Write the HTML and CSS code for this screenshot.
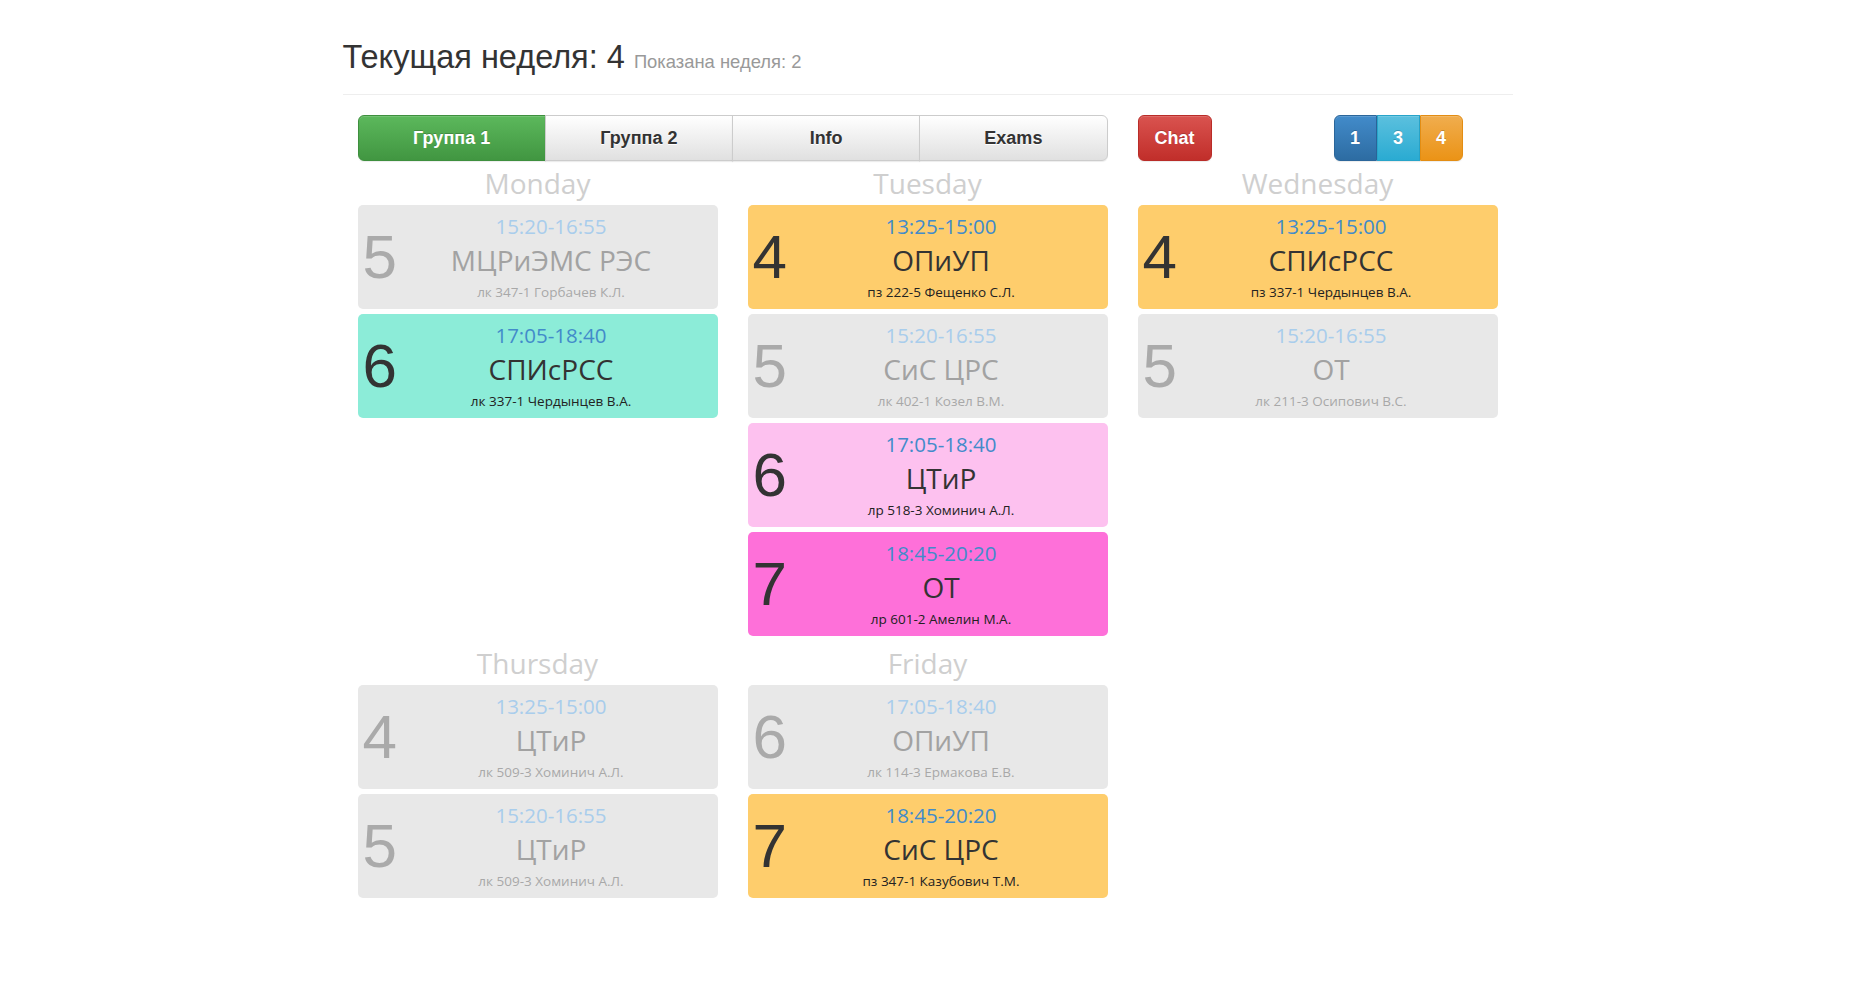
FILE: index.html
```html
<!DOCTYPE html>
<html lang="ru">
<head>
<meta charset="utf-8">
<title>Расписание</title>
<link rel="stylesheet" href="styles.css">
</head>
<body>
<div class="container">
  <div class="page-header">
    <h2>Текущая неделя: 4 <small>Показана неделя: 2</small></h2>
  </div>

  <div class="toolbar">
    <div class="toolbar-left">
      <div class="btn-group-justified">
        <a class="btn btn-success">Группа 1</a>
        <a class="btn btn-default">Группа 2</a>
        <a class="btn btn-default">Info</a>
        <a class="btn btn-default">Exams</a>
      </div>
    </div>
    <div class="toolbar-right">
      <a class="btn btn-danger btn-single">Chat</a>
      <div class="btn-group weeks">
        <a class="btn btn-primary">1</a>
        <a class="btn btn-info">3</a>
        <a class="btn btn-warning">4</a>
      </div>
    </div>
  </div>

  <div class="days">
    <div class="day">
      <div class="day-name">Monday</div>
      <div class="lesson past">
        <div class="num">5</div>
        <div class="body"><div class="time">15:20-16:55</div><div class="subj">МЦРиЭМС РЭС</div><div class="info">лк 347-1 Горбачев К.Л.</div></div>
      </div>
      <div class="lesson teal">
        <div class="num">6</div>
        <div class="body"><div class="time">17:05-18:40</div><div class="subj">СПИсРСС</div><div class="info">лк 337-1 Чердынцев В.А.</div></div>
      </div>
    </div>

    <div class="day">
      <div class="day-name">Tuesday</div>
      <div class="lesson orange">
        <div class="num">4</div>
        <div class="body"><div class="time">13:25-15:00</div><div class="subj">ОПиУП</div><div class="info">пз 222-5 Фещенко С.Л.</div></div>
      </div>
      <div class="lesson past">
        <div class="num">5</div>
        <div class="body"><div class="time">15:20-16:55</div><div class="subj">СиС ЦРС</div><div class="info">лк 402-1 Козел В.М.</div></div>
      </div>
      <div class="lesson lightpink">
        <div class="num">6</div>
        <div class="body"><div class="time">17:05-18:40</div><div class="subj">ЦТиР</div><div class="info">лр 518-3 Хоминич А.Л.</div></div>
      </div>
      <div class="lesson pink">
        <div class="num">7</div>
        <div class="body"><div class="time">18:45-20:20</div><div class="subj">ОТ</div><div class="info">лр 601-2 Амелин М.А.</div></div>
      </div>
    </div>

    <div class="day">
      <div class="day-name">Wednesday</div>
      <div class="lesson orange">
        <div class="num">4</div>
        <div class="body"><div class="time">13:25-15:00</div><div class="subj">СПИсРСС</div><div class="info">пз 337-1 Чердынцев В.А.</div></div>
      </div>
      <div class="lesson past">
        <div class="num">5</div>
        <div class="body"><div class="time">15:20-16:55</div><div class="subj">ОТ</div><div class="info">лк 211-3 Осипович В.С.</div></div>
      </div>
    </div>

    <div class="day">
      <div class="day-name">Thursday</div>
      <div class="lesson past">
        <div class="num">4</div>
        <div class="body"><div class="time">13:25-15:00</div><div class="subj">ЦТиР</div><div class="info">лк 509-3 Хоминич А.Л.</div></div>
      </div>
      <div class="lesson past">
        <div class="num">5</div>
        <div class="body"><div class="time">15:20-16:55</div><div class="subj">ЦТиР</div><div class="info">лк 509-3 Хоминич А.Л.</div></div>
      </div>
    </div>

    <div class="day">
      <div class="day-name">Friday</div>
      <div class="lesson past">
        <div class="num">6</div>
        <div class="body"><div class="time">17:05-18:40</div><div class="subj">ОПиУП</div><div class="info">лк 114-3 Ермакова Е.В.</div></div>
      </div>
      <div class="lesson orange">
        <div class="num">7</div>
        <div class="body"><div class="time">18:45-20:20</div><div class="subj">СиС ЦРС</div><div class="info">пз 347-1 Казубович Т.М.</div></div>
      </div>
    </div>
  </div>
</div>
</body>
</html>
```

FILE: styles.css
```css
* { box-sizing: border-box; }

body {
  margin: 0;
  background: #fff;
  color: #333;
  font-family: "Liberation Sans", Arial, sans-serif;
  font-size: 14px;
}

.container {
  width: 1170px;
  margin: 0 auto;
}

.page-header {
  margin: 40px 0 20px;
  padding-bottom: 9px;
  border-bottom: 1px solid #eee;
}

.page-header h2 {
  margin: 0 0 9px;
  font-size: 32.5px;
  font-weight: 500;
  line-height: 1.1;
  color: #333;
}

.page-header small {
  font-size: 18.4px;
  font-weight: 400;
  line-height: 1;
  color: #999;
}

.toolbar {
  display: grid;
  grid-template-columns: 780px 390px;
}

.toolbar-left,
.toolbar-right {
  padding: 0 15px;
}

.toolbar-right {
  display: flex;
  align-items: flex-start;
}

.btn {
  display: inline-block;
  padding: 10px 16px;
  font-size: 18px;
  line-height: 24px;
  font-weight: 700;
  text-align: center;
  border: 1px solid transparent;
  border-radius: 6px;
  cursor: pointer;
  white-space: nowrap;
  box-shadow: inset 0 1px 0 rgba(255,255,255,.15), 0 1px 1px rgba(0,0,0,.075);
}

.btn-group-justified {
  display: flex;
  width: 100%;
}

.btn-group-justified .btn {
  flex: 1 1 0;
  border-radius: 0;
}

.btn-group-justified .btn + .btn { margin-left: -1px; }

.btn-group-justified .btn:first-child { border-radius: 6px 0 0 6px; }
.btn-group-justified .btn:last-child { border-radius: 0 6px 6px 0; }

.btn-default {
  color: #333;
  text-shadow: 0 1px 0 #fff;
  background-image: linear-gradient(to bottom, #fff 0, #e0e0e0 100%);
  border-color: #ccc;
}

.btn-success {
  color: #fff;
  text-shadow: 0 -1px 0 rgba(0,0,0,.2);
  background-image: linear-gradient(to bottom, #5cb85c 0, #419641 100%);
  border-color: #3e8f3e;
}

.btn-danger {
  color: #fff;
  text-shadow: 0 -1px 0 rgba(0,0,0,.2);
  background-image: linear-gradient(to bottom, #d9534f 0, #c12e2a 100%);
  border-color: #b92c28;
}

.btn-primary {
  color: #fff;
  text-shadow: 0 -1px 0 rgba(0,0,0,.2);
  background-image: linear-gradient(to bottom, #428bca 0, #2d6ca2 100%);
  border-color: #2b669a;
}

.btn-info {
  color: #fff;
  text-shadow: 0 -1px 0 rgba(0,0,0,.2);
  background-image: linear-gradient(to bottom, #5bc0de 0, #2aabd2 100%);
  border-color: #28a4c9;
}

.btn-warning {
  color: #fff;
  text-shadow: 0 -1px 0 rgba(0,0,0,.2);
  background-image: linear-gradient(to bottom, #f0ad4e 0, #eb9316 100%);
  border-color: #e38d13;
}

.btn-group {
  display: flex;
}

.weeks {
  margin-left: 122px;
}

.weeks .btn {
  border-radius: 0;
  width: 43px;
  padding-left: 0;
  padding-right: 0;
}

.weeks .btn:first-child { border-radius: 6px 0 0 6px; }
.weeks .btn:last-child { border-radius: 0 6px 6px 0; }

.days {
  display: grid;
  grid-template-columns: repeat(3, 390px);
  align-items: start;
}

.day {
  padding: 0 15px;
}

.day-name {
  margin: 7px 0 7px;
  font-family: "Open Sans", sans-serif;
  font-size: 28px;
  line-height: 30px;
  text-align: center;
  color: #cfcfcf;
}

.lesson {
  display: grid;
  grid-template-columns: 27px 1fr;
  height: 104px;
  margin-bottom: 5px;
  border-radius: 5px;
  background: #e8e8e8;
}

.num {
  align-self: center;
  padding-left: 5px;
  font-family: "Liberation Sans", Arial, sans-serif;
  font-size: 62px;
  line-height: 62px;
  color: #333;
  white-space: nowrap;
}

.body {
  padding-top: 9px;
  text-align: center;
  font-family: "Open Sans", sans-serif;
}

.time {
  font-size: 20.5px;
  line-height: 24px;
  color: #428bca;
}

.subj {
  font-size: 28px;
  line-height: 44px;
  color: #333;
}

.info {
  font-size: 13.5px;
  line-height: 20px;
  color: #222;
}

.past .num { color: #aaa; }
.past .time { color: #a9cdec; }
.past .subj { color: #a2a2a2; }
.past .info { color: #a8a8a8; }

.teal { background: #8cecd8; }
.orange { background: #fecd6c; }
.lightpink { background: #fdc1ef; }
.pink { background: #fe70d9; }
```
